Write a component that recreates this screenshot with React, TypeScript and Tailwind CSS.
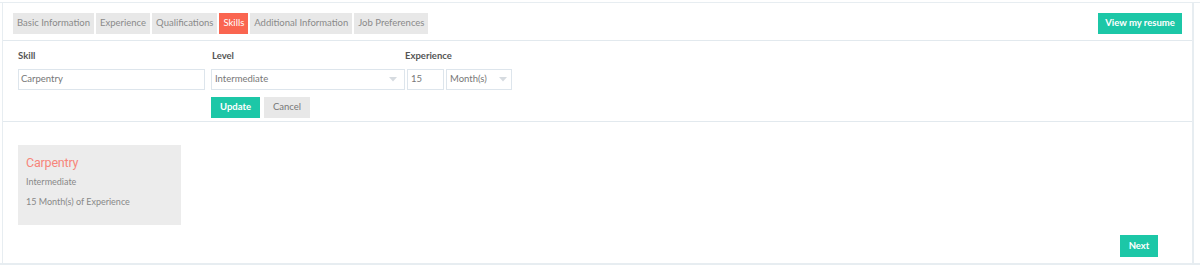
import React from "react";

const font = { fontFamily: "Lato, 'Open Sans', sans-serif" };

function Caret() {
  return (
    <svg width="8" height="5" viewBox="0 0 8 5" className="shrink-0">
      <path d="M0 0 L8 0 L4 4.5 Z" fill="#d6dbe0" />
    </svg>
  );
}

export default function App() {
  const tabs = [
    "Basic Information",
    "Experience",
    "Qualifications",
    "Skills",
    "Additional Information",
    "Job Preferences",
  ];
  return (
    <div className="w-[1200px] h-[269px] bg-white pt-[2px]" style={font}>
      <div className="h-[263px] border-t border-b-2 border-[#e7edf1] flex">
        <div className="ml-[2px] w-[1192px] border-l border-r-2 border-[#e7edf1] flex flex-col">
          {/* header */}
          <div className="h-[38px] border-b border-[#e2e9ee] flex items-start justify-between pt-[10px] pl-[10px] pr-[10px]">
            <div className="flex gap-[2px]">
              {tabs.map((t) => (
                <div
                  key={t}
                  className={
                    t === "Skills"
                      ? "h-[21px] px-[4px] flex items-center text-[9.5px] bg-[#fa6550] text-white"
                      : "h-[21px] px-[4px] flex items-center text-[9.5px] bg-[#e8e8e8] text-[#8a8a8a]"
                  }
                >
                  {t}
                </div>
              ))}
            </div>
            <div className="h-[21px] w-[84px] flex items-center justify-center bg-[#1cc7a7] text-white text-[9.5px] font-bold">
              View my resume
            </div>
          </div>

          {/* form */}
          <div className="h-[81px] border-b border-[#e2e9ee] pt-[8px] pl-[15px]">
            <div className="flex">
              <div className="w-[187px] flex flex-col">
                <div className="h-[14px] text-[9.5px] font-bold text-[#555] leading-[14px]">Skill</div>
                <div className="mt-[6px] h-[21px] border border-[#dde5ec] flex items-center px-[2px] text-[9.5px] text-[#777]">
                  Carpentry
                </div>
              </div>
              <div className="ml-[6px] w-[194px] flex flex-col">
                <div className="h-[14px] pl-[1px] text-[9.5px] font-bold text-[#555] leading-[14px]">Level</div>
                <div className="mt-[6px] h-[21px] border border-[#dde5ec] flex items-center justify-between pl-[3px] pr-[7px] text-[9.5px] text-[#777]">
                  <span>Intermediate</span>
                  <Caret />
                </div>
                <div className="mt-[7px] flex gap-[4px]">
                  <div className="h-[21px] w-[49px] bg-[#1cc7a7] text-white text-[9.5px] font-bold flex items-center justify-center">
                    Update
                  </div>
                  <div className="h-[21px] w-[46px] bg-[#e8e8e8] text-[#777] text-[9.5px] flex items-center justify-center">
                    Cancel
                  </div>
                </div>
              </div>
              <div className="flex flex-col">
                <div className="h-[14px] text-[9.5px] font-bold text-[#555] leading-[14px]">Experience</div>
                <div className="mt-[6px] flex gap-[2px] pl-[2px]">
                  <div className="h-[21px] w-[37px] border border-[#dde5ec] flex items-center px-[3px] text-[9.5px] text-[#777]">
                    15
                  </div>
                  <div className="h-[21px] w-[66px] border border-[#dde5ec] flex items-center justify-between pl-[3px] pr-[4px] text-[9.5px] text-[#777]">
                    <span>Month(s)</span>
                    <Caret />
                  </div>
                </div>
              </div>
            </div>
          </div>

          {/* list */}
          <div className="flex-1 flex flex-col pt-[23px] pl-[15px]">
            <div className="w-[163px] h-[80px] bg-[#ececec] pl-[8px] pt-[9px]">
              <div
                className="text-[12.5px] leading-[17px] text-[#f7857a] tracking-[-0.2px]"
                style={{ fontFamily: "'Liberation Sans Narrow', Roboto, sans-serif", fontWeight: 400 }}
              >
                Carpentry
              </div>
              <div className="mt-[5px] text-[9px] leading-[12px] text-[#888]">Intermediate</div>
              <div className="mt-[8px] text-[9px] leading-[12px] text-[#888]">15 Month(s) of Experience</div>
            </div>
            <div className="mt-[10px] flex justify-end pr-[34px]">
              <div className="h-[22px] w-[38px] bg-[#1cc7a7] text-white text-[9.5px] font-bold flex items-center justify-center">
                Next
              </div>
            </div>
          </div>
        </div>
      </div>
    </div>
  );
}
